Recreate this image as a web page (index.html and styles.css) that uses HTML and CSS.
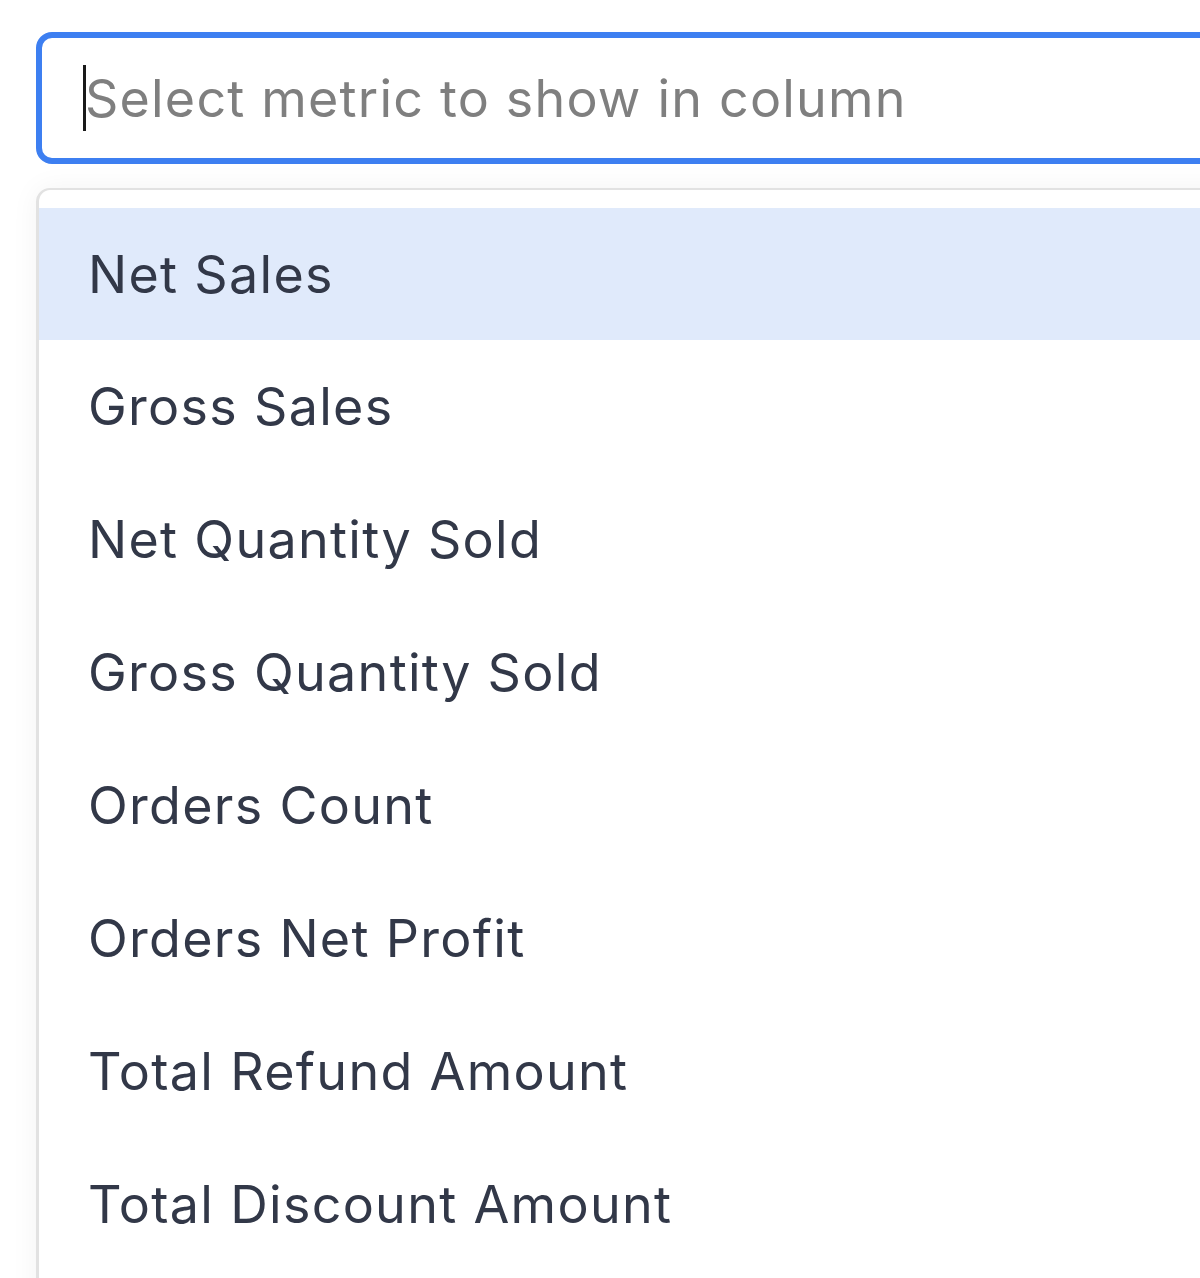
FILE: index.html
```html
<!DOCTYPE html>
<html>
<head>
<meta charset="utf-8">
<link rel="stylesheet" href="styles.css">
</head>
<body>
<div class="page">
  <div class="select-input">
    <span class="caret"></span><span class="placeholder">Select metric to show in column</span>
  </div>
  <ul class="menu">
    <li class="option active">Net Sales</li>
    <li class="option">Gross Sales</li>
    <li class="option">Net Quantity Sold</li>
    <li class="option">Gross Quantity Sold</li>
    <li class="option">Orders Count</li>
    <li class="option">Orders Net Profit</li>
    <li class="option">Total Refund Amount</li>
    <li class="option">Total Discount Amount</li>
  </ul>
</div>
</body>
</html>
```
FILE: styles.css
```css
html, body {
  margin: 0;
  padding: 0;
  background: #ffffff;
  overflow: hidden;
}
body {
  font-family: Inter, "Noto Sans", sans-serif;
  height: 1278px;
}
.page {
  padding: 32px 0 0 36px;
  width: 1400px;
}
.select-input {
  box-sizing: border-box;
  height: 132px;
  border: 6px solid #3d7ff1;
  border-radius: 16px;
  display: flex;
  align-items: center;
  padding-left: 41px;
  background: #fff;
}
.caret {
  display: inline-block;
  width: 3px;
  height: 66px;
  background: #1a1a1a;
}
.placeholder {
  font-size: 52px;
  color: #7f7f7f;
  letter-spacing: 1.2px;
  margin-left: -1px;
}
.menu {
  list-style: none;
  margin: 24px 0 0 0;
  padding: 18px 0 60px 0;
  border: 2px solid #e2e2e2;
  border-left-width: 3px;
  border-radius: 14px;
  box-shadow: 0 0 28px rgba(0, 0, 0, 0.05);
  background: #fff;
}
.option {
  height: 133px;
  display: flex;
  align-items: center;
  padding-left: 49px;
  font-size: 52px;
  color: #323848;
  letter-spacing: 1.3px;
}
.option.active {
  background: #e0eafb;
  height: 132px;
}
```
